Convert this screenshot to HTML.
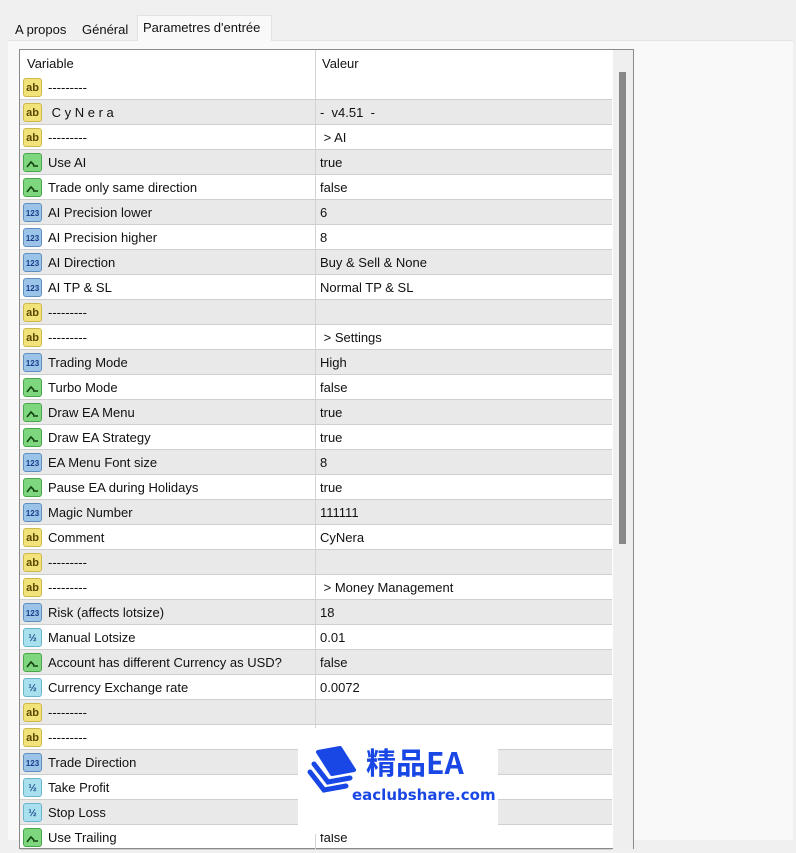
<!DOCTYPE html>
<html><head><meta charset="utf-8"><style>
*{margin:0;padding:0;box-sizing:border-box}
body{width:796px;height:834px;overflow:hidden;background:#f0f0f0;font-family:"Liberation Sans",Arial,sans-serif;font-size:13px;color:#111;position:relative}
.tab{position:absolute;top:19px;height:21px;font-size:13px;line-height:21px;color:#111}
.panel{position:absolute;left:8px;top:40px;width:785px;height:800px;background:#f9f9f9;border-top:1px solid #e4e4e4}
.active{position:absolute;left:137px;top:15px;width:135px;height:26px;background:#f9f9f9;border:1px solid #e2e2e2;border-bottom:none;padding-left:5px;line-height:24px}
.box{position:absolute;left:19px;top:49px;width:615px;height:800px;border:1px solid #8a8a8a;background:#fff}
.hdr{position:absolute;left:0;top:0;width:592px;height:25px;background:#fff}
.hdr span{position:absolute;top:6px}
.row{position:absolute;left:0;width:592px;height:25px;border-bottom:1px solid #cfcfcf}
.g{background:#e9e9e9}
.row .n{position:absolute;left:28px;top:5px;white-space:pre}
.row .v{position:absolute;left:300px;top:5px;white-space:pre}
.div{position:absolute;left:295px;top:0;width:1px;height:800px;background:#d4d4d4}
.ic{position:absolute;left:3px;top:3px;width:19px;height:19px;border-radius:3px;font-size:9px;font-weight:bold;text-align:center;line-height:19px}
.ab{background:#f2e27a;border:1px solid #cdb84a;color:#5a4a00;font-size:11px}
.bo{background:#7ed67e;border:1px solid #4aa64a}
.nu{background:#9cc3e8;border:1px solid #5f8fbf;color:#1a3d8a;font-size:8px}
.fr{background:#a8e0ee;border:1px solid #68b5cc;color:#1a4e8a;font-size:10px}
.sb{position:absolute;left:593px;top:0;width:20px;height:800px;background:#efefef}
.th{position:absolute;left:599px;top:22px;width:7px;height:472px;background:#888}
.wm{position:absolute;left:298px;top:728px;width:200px;height:106px;background:#fff}
</style></head><body>
<div class="panel"></div>
<div class="tab" style="left:15px">A propos</div>
<div class="tab" style="left:82px">Général</div>
<div class="tab active">Parametres d'entrée</div>
<div class="box">
<div class="hdr"><span style="left:7px">Variable</span><span style="left:302px">Valeur</span></div>
<div id="rows"></div>
<div class="div"></div>
<div class="sb"></div><div class="th"></div>
</div>
<div class="wm">
<svg width="60" height="60" viewBox="0 0 60 60" style="position:absolute;left:6px;top:14px">
<path d="M6 30 L20 48 L42 44" fill="none" stroke="#1947e6" stroke-width="5" stroke-linecap="round"/>
<path d="M10 22 L24 40 L46 36" fill="none" stroke="#1947e6" stroke-width="5" stroke-linecap="round"/>
<path d="M14 10 L36 6 L50 28 L28 32 Z" fill="#1947e6" stroke="#1947e6" stroke-width="4" stroke-linejoin="round"/>
</svg>
<div style="position:absolute;left:68px;top:16px;font-family:'Noto Sans CJK SC',sans-serif;font-weight:bold;font-size:30px;color:#1947e6;line-height:34px">精品EA</div>
<div style="position:absolute;left:54px;top:58px;font-family:'DejaVu Sans',sans-serif;font-weight:bold;font-size:15px;color:#1947e6">eaclubshare.com</div>
</div>
<script>
var R=[["ab","---------",""],["ab"," C y N e r a","-  v4.51  -"],["ab","---------"," > AI"],["bo","Use AI","true"],["bo","Trade only same direction","false"],["nu","AI Precision lower","6"],["nu","AI Precision higher","8"],["nu","AI Direction","Buy & Sell & None"],["nu","AI TP & SL","Normal TP & SL"],["ab","---------",""],["ab","---------"," > Settings"],["nu","Trading Mode","High"],["bo","Turbo Mode","false"],["bo","Draw EA Menu","true"],["bo","Draw EA Strategy","true"],["nu","EA Menu Font size","8"],["bo","Pause EA during Holidays","true"],["nu","Magic Number","111111"],["ab","Comment","CyNera"],["ab","---------",""],["ab","---------"," > Money Management"],["nu","Risk (affects lotsize)","18"],["fr","Manual Lotsize","0.01"],["bo","Account has different Currency as USD?","false"],["fr","Currency Exchange rate","0.0072"],["ab","---------",""],["ab","---------",""],["nu","Trade Direction",""],["fr","Take Profit",""],["fr","Stop Loss",""],["bo","Use Trailing","false"]];
var h="";
R.forEach(function(r,i){
var t=r[0]=="ab"?"ab":r[0]=="nu"?"123":r[0]=="fr"?"½":'<svg width="15" height="15" viewBox="0 0 15 15" style="margin-top:2px"><path d="M2 11 L6 6 L9 9 M8 10 L13 10" stroke="#114411" stroke-width="1.6" fill="none"/></svg>';
h+='<div class="row'+(i%2?' g':'')+'" style="top:'+(25+i*25)+'px"><div class="ic '+r[0]+'">'+t+'</div><span class="n">'+r[1]+'</span><span class="v">'+r[2]+'</span></div>';
});
document.getElementById("rows").innerHTML=h;
</script>
</body></html>
